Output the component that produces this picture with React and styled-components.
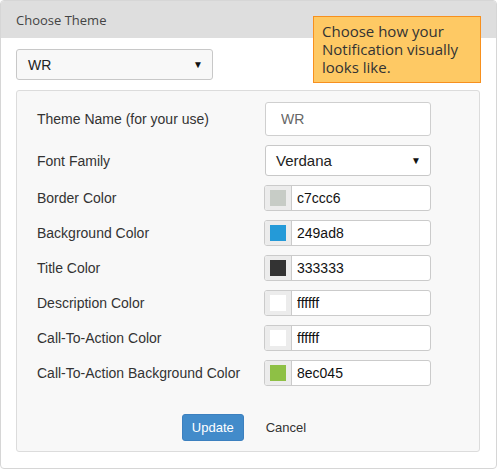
import React from "react";
import styled, {createGlobalStyle} from "styled-components";

const GlobalStyle = createGlobalStyle`
  body {
    margin: 0;
    background: #fff;
    font-family: "Liberation Sans", Arial, sans-serif;
  }
`;

const Panel = styled.div`
  position: relative;
  box-sizing: border-box;
  width: 497px;
  height: 469px;
  border: 1px solid #d6d6d6;
  border-radius: 4px;
  overflow: hidden;
  background: #fff;
`;

const Header = styled.div`
  height: 37px;
  line-height: 38px;
  padding-left: 15px;
  background: #dedede;
  font-family: "Open Sans", sans-serif;
  font-size: 13px;
  color: #444;
`;

const Body = styled.div`
  padding: 11px 17px 0 15px;
`;

const Tip = styled.div`
  position: absolute;
  left: 312px;
  top: 15px;
  box-sizing: border-box;
  width: 168px;
  height: 67px;
  padding: 5px 8px;
  background: #fec964;
  border: 1px solid #f7901e;
  font-family: "Open Sans", sans-serif;
  font-size: 15px;
  line-height: 18px;
  color: #333;
`;

// dropdown drawn as a box with the chosen value and a caret
const Dropdown = styled.div`
  display: flex;
  align-items: center;
  justify-content: space-between;
  box-sizing: border-box;
  width: ${p => p.width}px;
  height: ${p => p.height}px;
  padding: 0 9px 0 ${p => p.pad}px;
  border: 1px solid #c8c8c8;
  border-radius: 3px;
  background: ${p => p.bg};
  font-size: ${p => p.size}px;
  color: #222;
`;

const Caret = styled.span`
  font-size: 10px;
  color: #111;
`;

const Inner = styled.div`
  box-sizing: border-box;
  margin-top: 10px;
  width: 464px;
  height: 362px;
  padding: 11px 0 0 20px;
  border: 1px solid #dcdcdc;
  border-radius: 3px;
  background: #f8f8f8;
`;

const Form = styled.div`
  display: grid;
  grid-template-columns: 228px 166px;
  row-gap: 9px;
  align-items: center;
`;

const Label = styled.div`
  font-size: 14px;
  color: #333;
`;

const TextInput = styled.input`
  display: block;
  box-sizing: border-box;
  width: 166px;
  height: 34px;
  padding: 0 15px;
  border: 1px solid #cfcfcf;
  border-radius: 3px;
  background: #fff;
  font-family: "Liberation Sans", Arial, sans-serif;
  font-size: 14px;
  color: #666;
  outline: none;
`;

const ColorField = styled.div`
  display: flex;
  box-sizing: border-box;
  width: 167px;
  height: 26px;
  margin-left: -1px;
  border: 1px solid #cbcbcb;
  border-radius: 3px;
  overflow: hidden;
  background: #fff;
`;

const Addon = styled.div`
  display: flex;
  align-items: center;
  justify-content: center;
  width: 26px;
  background: #ececec;
  border-right: 1px solid #cbcbcb;
`;

const Swatch = styled.span`
  width: 16px;
  height: 16px;
  background: ${p => p.color};
`;

const ColorInput = styled.input`
  flex: 1;
  min-width: 0;
  border: 0;
  padding: 0 5px;
  background: transparent;
  font-family: "Liberation Sans", Arial, sans-serif;
  font-size: 14px;
  color: #111;
  outline: none;
`;

const Actions = styled.div`
  display: flex;
  justify-content: center;
  gap: 10px;
  margin: 28px 0 0 -16px;
`;

const PrimaryButton = styled.button`
  height: 27px;
  padding: 0 9px;
  border: 1px solid #3c80bf;
  border-radius: 3px;
  background: #428bca;
  font-family: "Liberation Sans", Arial, sans-serif;
  font-size: 13px;
  color: #fff;
`;

const LinkButton = styled.button`
  height: 27px;
  padding: 0 12px;
  border: 0;
  background: transparent;
  font-family: "Liberation Sans", Arial, sans-serif;
  font-size: 13px;
  color: #333;
`;

const colors = [
    {label: "Border Color", value: "c7ccc6", swatch: "#c7ccc6"},
    {label: "Background Color", value: "249ad8", swatch: "#249ad8"},
    {label: "Title Color", value: "333333", swatch: "#333333"},
    {label: "Description Color", value: "ffffff", swatch: "#ffffff"},
    {label: "Call-To-Action Color", value: "ffffff", swatch: "#ffffff"},
    {label: "Call-To-Action Background Color", value: "8ec045", swatch: "#8ec045"},
];

export default function App() {
    return (
        <Panel>
            <GlobalStyle/>
            <Header>Choose Theme</Header>
            <Body>
                <Dropdown width={197} height={31} pad={11} size={14} bg="#f8f8f8">
                    WR<Caret>▼</Caret>
                </Dropdown>
                <Inner>
                    <Form>
                        <Label>Theme Name (for your use)</Label>
                        <TextInput defaultValue="WR"/>
                        <Label>Font Family</Label>
                        <Dropdown width={166} height={31} pad={10} size={15} bg="#fff">
                            Verdana<Caret>▼</Caret>
                        </Dropdown>
                        {colors.map(item => (
                            <React.Fragment key={item.label}>
                                <Label>{item.label}</Label>
                                <ColorField>
                                    <Addon><Swatch color={item.swatch}/></Addon>
                                    <ColorInput defaultValue={item.value}/>
                                </ColorField>
                            </React.Fragment>
                        ))}
                    </Form>
                    <Actions>
                        <PrimaryButton>Update</PrimaryButton>
                        <LinkButton>Cancel</LinkButton>
                    </Actions>
                </Inner>
            </Body>
            <Tip>Choose how your Notification visually looks like.</Tip>
        </Panel>
    );
}
